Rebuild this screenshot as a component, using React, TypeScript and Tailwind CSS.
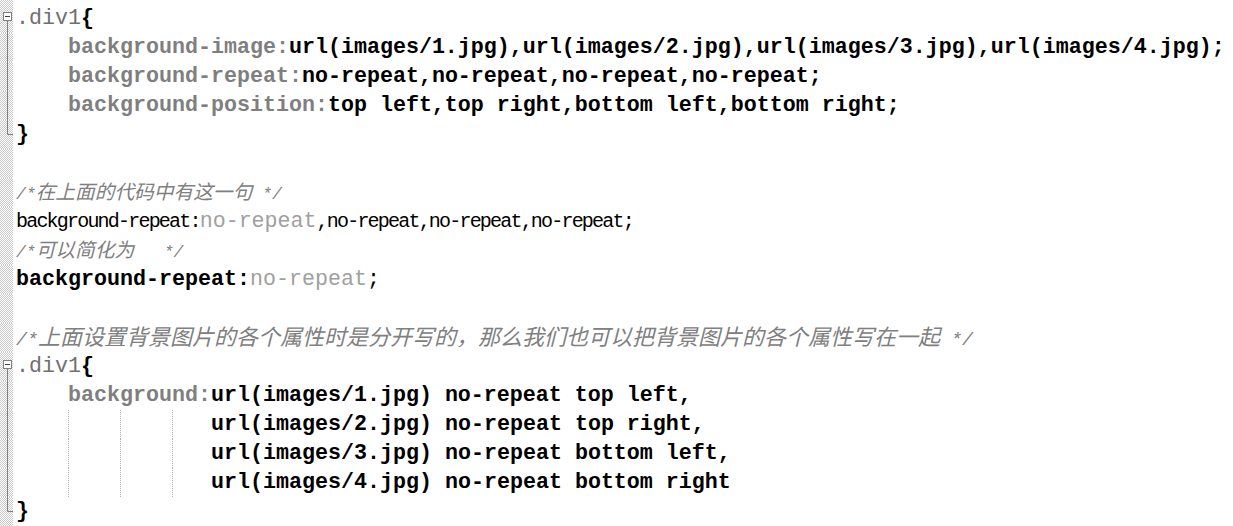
import React from 'react';

type Mark = 'none' | 'open' | 'line' | 'end';

const mono = "font-['Liberation_Mono','Courier_New',monospace]";
const hatch = 'bg-[repeating-conic-gradient(#c9c9c9_0_25%,#ffffff_0_50%)] bg-[length:2px_2px]';

// fold margin cell, drawn over the hatched strip
const Margin: React.FC<{ mark: Mark }> = ({ mark }) => (
  <div className={`w-[13px] h-[29px] shrink-0 ${hatch}`}>
    {mark !== 'none' && (
      <svg width="13" height="29" viewBox="0 0 13 29">
        {mark === 'open' && (
          <>
            <line x1="7.5" y1="16.5" x2="7.5" y2="29" stroke="#808080" />
            <rect x="3.5" y="8.5" width="8" height="8" fill="#fff" stroke="#808080" />
            <line x1="5" y1="12.5" x2="10" y2="12.5" stroke="#404040" />
          </>
        )}
        {mark === 'line' && <line x1="7.5" y1="0" x2="7.5" y2="29" stroke="#808080" />}
        {mark === 'end' && (
          <polyline points="7.5,0 7.5,14.5 13,14.5" fill="none" stroke="#808080" />
        )}
      </svg>
    )}
  </div>
);

const Row: React.FC<{ mark?: Mark; children?: React.ReactNode }> = ({ mark = 'none', children }) => (
  <div className="flex h-[29px]">
    <Margin mark={mark} />
    <div className={`pl-[3px] flex items-center whitespace-pre leading-[29px] text-[21.67px] text-black ${mono}`}>
      {children}
    </div>
  </div>
);

const Prop: React.FC<{ children: React.ReactNode }> = ({ children }) => (
  <span className="font-bold text-[#7f7f7f]">{children}</span>
);
const Val: React.FC<{ children: React.ReactNode }> = ({ children }) => (
  <span className="font-bold text-black">{children}</span>
);

const CJK = /([\u3000-\u9fff\uff00-\uffef]+)/;

// comment: half-width glyphs take half the width of a CJK glyph
const Comment: React.FC<{ text: string; big?: boolean }> = ({ text, big }) => {
  const parts = text.split(CJK).filter(Boolean);
  return (
    <span className="italic text-[#808080]">
      {parts.map((p, i) =>
        CJK.test(p) ? (
          <span
            key={i}
            className={`font-['Noto_Sans_CJK_SC',sans-serif] ${big ? 'text-[22px]' : 'text-[19.7px]'}`}
          >
            {p}
          </span>
        ) : (
          <span key={i} className={big ? 'text-[18.33px]' : 'text-[16.4px]'}>
            {p}
          </span>
        )
      )}
    </span>
  );
};

const Guides: React.FC = () => (
  <span className="inline-flex h-[29px]">
    <span className="w-[52px]" />
    <span className="w-[52px] h-[29px] border-l border-dotted border-[#b0b0b0]" />
    <span className="w-[52px] h-[29px] border-l border-dotted border-[#b0b0b0]" />
    <span className="w-[39px] h-[29px] border-l border-dotted border-[#b0b0b0]" />
  </span>
);

export default function App() {
  return (
    <div className="w-[1233px] h-[526px] bg-white overflow-hidden">
      <div className={`h-[4px] w-[13px] ${hatch}`} />
      <Row mark="open">
        <span className="text-[#707070]">.div1</span>
        <Val>{'{'}</Val>
      </Row>
      <Row mark="line">
        <Prop>{'    background-image:'}</Prop>
        <Val>url(images/1.jpg),url(images/2.jpg),url(images/3.jpg),url(images/4.jpg);</Val>
      </Row>
      <Row mark="line">
        <Prop>{'    background-repeat:'}</Prop>
        <Val>no-repeat,no-repeat,no-repeat,no-repeat;</Val>
      </Row>
      <Row mark="line">
        <Prop>{'    background-position:'}</Prop>
        <Val>top left,top right,bottom left,bottom right;</Val>
      </Row>
      <Row mark="end">
        <Val>{'}'}</Val>
      </Row>
      <Row />
      <Row>
        <Comment text="/*在上面的代码中有这一句 */" />
      </Row>
      <Row>
        <span className="text-[20px] tracking-[-1.8px]">background-repeat:</span>
        <span className="text-[#a0a0a0]">no-repeat</span>
        <span className="text-[20px] tracking-[-1.8px]">,no-repeat,no-repeat,no-repeat;</span>
      </Row>
      <Row>
        <Comment text="/*可以简化为   */" />
      </Row>
      <Row>
        <Val>background-repeat:</Val>
        <span className="text-[#a0a0a0]">no-repeat</span>
        <span>;</span>
      </Row>
      <Row />
      <Row>
        <Comment big text="/*上面设置背景图片的各个属性时是分开写的，那么我们也可以把背景图片的各个属性写在一起 */" />
      </Row>
      <Row mark="open">
        <span className="text-[#707070]">.div1</span>
        <Val>{'{'}</Val>
      </Row>
      <Row mark="line">
        <Prop>{'    background:'}</Prop>
        <Val>url(images/1.jpg) no-repeat top left,</Val>
      </Row>
      <Row mark="line">
        <Guides />
        <Val>url(images/2.jpg) no-repeat top right,</Val>
      </Row>
      <Row mark="line">
        <Guides />
        <Val>url(images/3.jpg) no-repeat bottom left,</Val>
      </Row>
      <Row mark="line">
        <Guides />
        <Val>url(images/4.jpg) no-repeat bottom right</Val>
      </Row>
      <Row mark="end">
        <Val>{'}'}</Val>
      </Row>
    </div>
  );
}
